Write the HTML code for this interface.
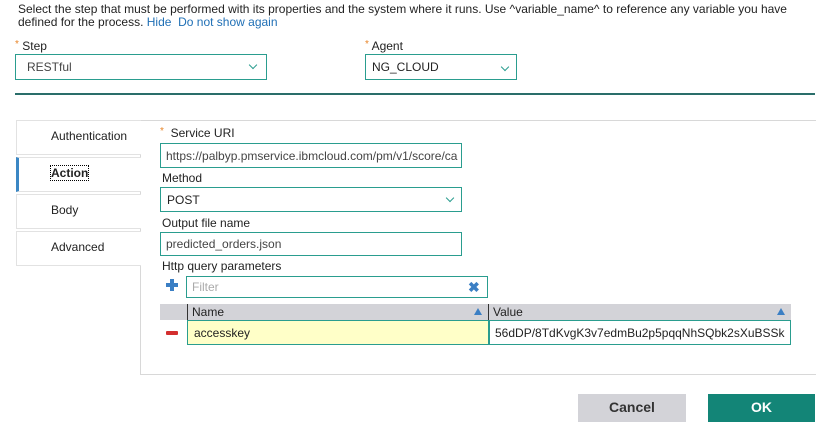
<!DOCTYPE html>
<html><head><style>
*{box-sizing:border-box;margin:0;padding:0}
body{width:822px;height:438px;background:#fff;font-family:"Liberation Sans",Arial,sans-serif;font-size:12px;color:#222;position:relative;overflow:hidden}
.a{position:absolute}
.box{position:absolute;border:1px solid #2a9d8f;background:#fff;padding-left:8px;display:flex;align-items:center;font-size:12px}
.lbl{position:absolute;font-size:12px;color:#222}
.st{color:#e8862a;font-size:10px;vertical-align:top}
.chev{position:absolute;width:6px;height:6px;border-right:1.3px solid #2a9d8f;border-bottom:1.3px solid #2a9d8f;transform:rotate(45deg)}
.tab{position:absolute;left:16px;width:125px;height:35px;border:1px solid #e2e2e2;border-right:none;background:#fff;padding-left:34px;padding-bottom:4px;display:flex;align-items:center}
a{color:#1f6fb5;text-decoration:none}
</style></head><body>
<div class="a" style="left:18px;top:3px;line-height:13px;width:800px">Select the step that must be performed with its properties and the system where it runs. Use ^variable_name^ to reference any variable you have defined for the process. <a>Hide</a>&nbsp;&nbsp;<a>Do not show again</a></div>
<div class="lbl" style="left:15px;top:39px"><span class="st">*</span> Step</div>
<div class="box" style="left:15px;top:54px;width:252px;height:26px;padding-left:11px;color:#444">RESTful</div>
<div class="chev" style="left:250px;top:62px"></div>
<div class="lbl" style="left:365px;top:39px"><span class="st">*</span> Agent</div>
<div class="box" style="left:365px;top:54px;width:152px;height:26px;padding-left:6px">NG_CLOUD</div>
<div class="chev" style="left:502px;top:64px"></div>
<div class="a" style="left:15px;top:93px;width:800px;height:2px;background:#2a6e6a"></div>

<div class="a" style="left:140px;top:120px;width:676px;height:255px;border:1px solid #d8d8d8;border-right:none"></div>
<div class="tab" style="top:120px">Authentication</div>
<div class="tab" style="top:157px;border-left:3px solid #3b87c4;padding-left:32px;font-weight:bold"><span style="outline:1px dotted #000">Action</span></div>
<div class="tab" style="top:194px">Body</div>
<div class="tab" style="top:231px">Advanced</div>

<div class="lbl" style="left:160px;top:126px"><span class="st">*</span>&nbsp; Service URI</div>
<div class="box" style="left:160px;top:143px;width:302px;height:25px;padding-left:5px;color:#444;overflow:hidden;white-space:nowrap">https://palbyp.pmservice.ibmcloud.com/pm/v1/score/ca</div>
<div class="lbl" style="left:162px;top:171px">Method</div>
<div class="box" style="left:160px;top:187px;width:302px;height:25px;padding-left:6px">POST</div>
<div class="chev" style="left:447px;top:195px"></div>
<div class="lbl" style="left:162px;top:216px">Output file name</div>
<div class="box" style="left:160px;top:232px;width:302px;height:24px;padding-left:5px;color:#444">predicted_orders.json</div>
<div class="lbl" style="left:162px;top:259px">Http query parameters</div>

<div class="a" style="left:166px;top:283px;width:12px;height:4px;background:#3b7fc4"></div>
<div class="a" style="left:170px;top:279px;width:4px;height:12px;background:#3b7fc4"></div>
<div class="box" style="left:186px;top:276px;width:302px;height:22px;padding-left:5px;color:#aaa">Filter</div>
<div class="a" style="left:468px;top:279px;color:#3b7fc4;font-weight:bold;font-size:14px">✖</div>

<div class="a" style="left:160px;top:304px;width:631px;height:16px;background:#d3d3d8"></div>
<div class="a" style="left:187px;top:304px;width:1px;height:16px;background:#333"></div>
<div class="a" style="left:488px;top:304px;width:1px;height:16px;background:#333"></div>
<div class="a" style="left:192px;top:304px;line-height:16px">Name</div>
<div class="a" style="left:493px;top:304px;line-height:16px">Value</div>
<div class="a" style="left:474px;top:308px;width:0;height:0;border-left:4px solid transparent;border-right:4px solid transparent;border-bottom:7px solid #3b7fc4"></div>
<div class="a" style="left:777px;top:308px;width:0;height:0;border-left:4px solid transparent;border-right:4px solid transparent;border-bottom:7px solid #3b7fc4"></div>
<div class="a" style="left:166px;top:331px;width:12px;height:4px;background:#d32f2f;border-radius:1px"></div>
<div class="box" style="left:187px;top:320px;width:302px;height:25px;background:#ffffc8;padding-left:6px">accesskey</div>
<div class="box" style="left:489px;top:320px;width:302px;height:25px;padding-left:5px;overflow:hidden;white-space:nowrap">56dDP/8TdKvgK3v7edmBu2p5pqqNhSQbk2sXuBSSk</div>

<div class="a" style="left:578px;top:394px;width:108px;height:28px;background:#d3d3d8;color:#333;font-weight:bold;font-size:14px;display:flex;align-items:center;justify-content:center;padding-bottom:3px">Cancel</div>
<div class="a" style="left:708px;top:394px;width:107px;height:28px;background:#138577;color:#fff;font-weight:bold;font-size:14px;display:flex;align-items:center;justify-content:center;padding-bottom:3px">OK</div>
</body></html>
